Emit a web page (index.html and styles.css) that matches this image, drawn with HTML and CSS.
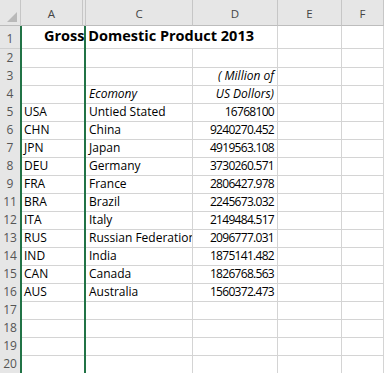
FILE: index.html
```html
<!DOCTYPE html>
<html lang="en">
<head>
  <meta charset="UTF-8">
  <meta name="viewport" content="width=device-width, initial-scale=1.0">
  <title>GDP 2013</title>
  <link rel="stylesheet" href="styles.css">
</head>
<body>
  <div class="sheet">
    <div class="row head">
      <div class="corner"><span class="tri"></span></div>
      <div class="colh">A</div>
      <div class="colh hidden-col"></div>
      <div class="colh">C</div>
      <div class="colh">D</div>
      <div class="colh">E</div>
      <div class="colh">F</div>
    </div>

    <div class="row r-title">
      <div class="rh">1</div>
      <div class="cell title">Gross Domestic Product 2013</div>
      <div class="cell"></div>
      <div class="cell"></div>
    </div>
    <div class="row">
      <div class="rh">2</div>
      <div class="cell ab"></div><div class="cell"></div><div class="cell"></div><div class="cell"></div><div class="cell"></div>
    </div>
    <div class="row">
      <div class="rh">3</div>
      <div class="cell ab"></div><div class="cell"></div><div class="cell num note">( Million of</div><div class="cell"></div><div class="cell"></div>
    </div>
    <div class="row">
      <div class="rh">4</div>
      <div class="cell ab"></div><div class="cell note">Ecomony</div><div class="cell num note">US Dollors)</div><div class="cell"></div><div class="cell"></div>
    </div>
    <div class="row">
      <div class="rh">5</div>
      <div class="cell ab">USA</div><div class="cell">Untied Stated</div><div class="cell num">16768100</div><div class="cell"></div><div class="cell"></div>
    </div>
    <div class="row">
      <div class="rh">6</div>
      <div class="cell ab">CHN</div><div class="cell">China</div><div class="cell num">9240270.452</div><div class="cell"></div><div class="cell"></div>
    </div>
    <div class="row">
      <div class="rh">7</div>
      <div class="cell ab">JPN</div><div class="cell">Japan</div><div class="cell num">4919563.108</div><div class="cell"></div><div class="cell"></div>
    </div>
    <div class="row">
      <div class="rh">8</div>
      <div class="cell ab">DEU</div><div class="cell">Germany</div><div class="cell num">3730260.571</div><div class="cell"></div><div class="cell"></div>
    </div>
    <div class="row">
      <div class="rh">9</div>
      <div class="cell ab">FRA</div><div class="cell">France</div><div class="cell num">2806427.978</div><div class="cell"></div><div class="cell"></div>
    </div>
    <div class="row">
      <div class="rh">11</div>
      <div class="cell ab">BRA</div><div class="cell">Brazil</div><div class="cell num">2245673.032</div><div class="cell"></div><div class="cell"></div>
    </div>
    <div class="row">
      <div class="rh">12</div>
      <div class="cell ab">ITA</div><div class="cell">Italy</div><div class="cell num">2149484.517</div><div class="cell"></div><div class="cell"></div>
    </div>
    <div class="row">
      <div class="rh">13</div>
      <div class="cell ab">RUS</div><div class="cell">Russian Federation</div><div class="cell num">2096777.031</div><div class="cell"></div><div class="cell"></div>
    </div>
    <div class="row">
      <div class="rh">14</div>
      <div class="cell ab">IND</div><div class="cell">India</div><div class="cell num">1875141.482</div><div class="cell"></div><div class="cell"></div>
    </div>
    <div class="row">
      <div class="rh">15</div>
      <div class="cell ab">CAN</div><div class="cell">Canada</div><div class="cell num">1826768.563</div><div class="cell"></div><div class="cell"></div>
    </div>
    <div class="row">
      <div class="rh">16</div>
      <div class="cell ab">AUS</div><div class="cell">Australia</div><div class="cell num">1560372.473</div><div class="cell"></div><div class="cell"></div>
    </div>
    <div class="row">
      <div class="rh">17</div>
      <div class="cell ab"></div><div class="cell"></div><div class="cell"></div><div class="cell"></div><div class="cell"></div>
    </div>
    <div class="row">
      <div class="rh">18</div>
      <div class="cell ab"></div><div class="cell"></div><div class="cell"></div><div class="cell"></div><div class="cell"></div>
    </div>
    <div class="row">
      <div class="rh">19</div>
      <div class="cell ab"></div><div class="cell"></div><div class="cell"></div><div class="cell"></div><div class="cell"></div>
    </div>
    <div class="row">
      <div class="rh">20</div>
      <div class="cell ab"></div><div class="cell"></div><div class="cell"></div><div class="cell"></div><div class="cell"></div>
    </div>

    <!-- selection border over columns A:B -->
    <div class="sel-line sel-left"></div>
    <div class="sel-line sel-right"></div>
  </div>
</body>
</html>
```

FILE: styles.css
```css
* {
  margin: 0;
  padding: 0;
  box-sizing: border-box;
}

body {
  background: #ffffff;
  font-family: 'Open Sans', sans-serif;
  font-size: 12px;
  color: #000000;
  overflow: hidden;
}

.sheet {
  position: relative;
  width: 384px;
}

.row {
  display: grid;
  grid-template-columns: 21px 62px 3px 107px 85px 64px 1fr;
  height: 18px;
}

.row.head {
  height: 26px;
  background: #e6e6e6;
}

.row.r-title {
  height: 23px;
}

/* column headers */
.corner {
  display: flex;
  align-items: flex-end;
  justify-content: flex-end;
  padding: 0 3px 3px 0;
  border-right: 1px solid #c6c6c6;
  border-bottom: 1px solid #bdbdbd;
}

.tri {
  width: 0;
  height: 0;
  border-left: 10px solid transparent;
  border-bottom: 10px solid #b9b9b9;
}

.colh {
  display: flex;
  align-items: flex-end;
  justify-content: center;
  padding-bottom: 4px;
  font-size: 11.5px;
  color: #444444;
  border-right: 1px solid #c6c6c6;
  border-bottom: 1px solid #bdbdbd;
}

.colh.hidden-col {
  border-left: 1px solid #c6c6c6;
  margin-left: -1px;
}

/* row headers */
.rh {
  display: flex;
  align-items: flex-end;
  justify-content: center;
  padding-bottom: 1px;
  background: #e6e6e6;
  color: #555555;
  font-size: 12px;
  border-right: 1px solid #c6c6c6;
  border-bottom: 1px solid #cfcfcf;
}

/* cells */
.cell {
  display: flex;
  align-items: flex-end;
  padding: 0 3px 1px 3px;
  white-space: nowrap;
  overflow: hidden;
  border-right: 1px solid #d4d4d4;
  border-bottom: 1px solid #d4d4d4;
}

.cell.ab {
  grid-column: span 2;
}

.cell.num {
  justify-content: flex-end;
  letter-spacing: -0.7px;
}

.cell.note {
  font-style: italic;
  letter-spacing: 0;
}

.cell.title {
  grid-column: span 4;
  justify-content: center;
  padding-bottom: 3px;
  font-size: 14.5px;
  font-weight: 700;
}

/* green selection edges */
.sel-line {
  position: absolute;
  top: 26px;
  bottom: 0;
  width: 2px;
  background: #217346;
}

.sel-left {
  left: 20px;
}

.sel-right {
  left: 84px;
}
```
